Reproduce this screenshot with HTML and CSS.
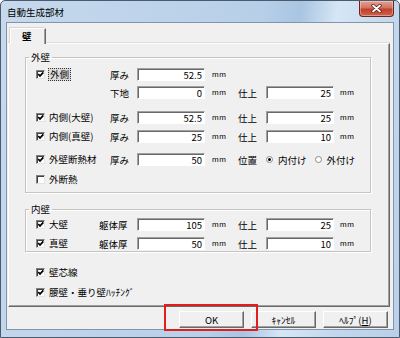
FILE: index.html
```html
<!DOCTYPE html>
<html lang="ja">
<head>
  <meta charset="UTF-8" />
  <title>自動生成部材</title>
  <link rel="stylesheet" href="styles.css">
</head>
<body>
  <div class="window">
    <div class="titlebar">
      <span class="title">自動生成部材</span>
      <button class="close" aria-label="閉じる">
        <svg width="11" height="9" viewBox="0 0 11 9">
          <path d="M2 1.5 L9 7.5 M9 1.5 L2 7.5" stroke="#5a2018" stroke-width="3.4" stroke-linecap="round" fill="none"/>
          <path d="M2 1.5 L9 7.5 M9 1.5 L2 7.5" stroke="#fff" stroke-width="1.8" stroke-linecap="round" fill="none"/>
        </svg>
      </button>
    </div>

    <div class="client">
      <div class="tabs"><div class="tab">壁</div></div>

      <div class="panel">
        <!-- 外壁 -->
        <fieldset class="group outer">
          <legend>外壁</legend>
          <div class="row">
            <label class="chk"><span class="box on"></span><span class="focus">外側</span></label>
            <span class="lbl">厚み</span>
            <input class="field" value="52.5" />
            <span class="unit">mm</span>
          </div>
          <div class="row gap5">
            <span class="chk"></span>
            <span class="lbl">下地</span>
            <input class="field" value="0" />
            <span class="unit">mm</span>
            <span class="lbl2">仕上</span>
            <input class="field" value="25" />
            <span class="unit2">mm</span>
          </div>
          <div class="row gap12">
            <label class="chk"><span class="box on"></span>内側(大壁)</label>
            <span class="lbl">厚み</span>
            <input class="field" value="52.5" />
            <span class="unit">mm</span>
            <span class="lbl2">仕上</span>
            <input class="field" value="25" />
            <span class="unit2">mm</span>
          </div>
          <div class="row gap6">
            <label class="chk"><span class="box on"></span>内側(真壁)</label>
            <span class="lbl">厚み</span>
            <input class="field" value="25" />
            <span class="unit">mm</span>
            <span class="lbl2">仕上</span>
            <input class="field" value="10" />
            <span class="unit2">mm</span>
          </div>
          <div class="row gap10">
            <label class="chk"><span class="box on"></span>外壁断熱材</label>
            <span class="lbl">厚み</span>
            <input class="field" value="50" />
            <span class="unit">mm</span>
            <span class="lbl2">位置</span>
            <label class="radio"><span class="dot on"></span>内付け</label>
            <label class="radio second"><span class="dot"></span>外付け</label>
          </div>
          <div class="row gap7">
            <label class="chk"><span class="box"></span>外断熱</label>
          </div>
        </fieldset>

        <!-- 内壁 -->
        <fieldset class="group inner">
          <legend>内壁</legend>
          <div class="row">
            <label class="chk"><span class="box on"></span>大壁</label>
            <span class="lbl">躯体厚</span>
            <input class="field" value="105" />
            <span class="unit">mm</span>
            <span class="lbl2">仕上</span>
            <input class="field" value="25" />
            <span class="unit2">mm</span>
          </div>
          <div class="row gap6">
            <label class="chk"><span class="box on"></span>真壁</label>
            <span class="lbl">躯体厚</span>
            <input class="field" value="50" />
            <span class="unit">mm</span>
            <span class="lbl2">仕上</span>
            <input class="field" value="10" />
            <span class="unit2">mm</span>
          </div>
        </fieldset>

        <div class="extras">
          <label class="chk"><span class="box on"></span>壁芯線</label>
          <label class="chk"><span class="box on"></span>腰壁・垂り壁ﾊｯﾁﾝｸﾞ</label>
        </div>
      </div>

      <div class="footer">
        <div class="ok-wrap">
          <button class="btn">OK</button>
          <span class="mark"></span>
        </div>
        <button class="btn">ｷｬﾝｾﾙ</button>
        <button class="btn">ﾍﾙﾌﾟ(<u>H</u>)</button>
      </div>
    </div>
  </div>
</body>
</html>
```

FILE: styles.css
```css
:root {
  --face: #f0f0f0;
  --shadow: #a0a0a0;
  --dark: #696969;
  --ui: "Noto Sans CJK JP", "Noto Sans", sans-serif;
}
* { box-sizing: border-box; margin: 0; padding: 0; }
body { background: #fff; font-family: var(--ui); font-size: 9.5px; color: #000; }

/* Window frame */
.window {
  width: 400px;
  height: 338px;
  border: 1px solid #4b5a6d;
  border-radius: 5px 5px 0 0;
  background: linear-gradient(100deg, #c6d9ed 0%, #b7cfe8 58%, #a9c5e2 66%, #d6e6f5 74%, #c3d8ed 86%, #b9d0e8 100%);
  display: flex;
  flex-direction: column;
  padding: 0 5px 7px 5px;
}
.titlebar {
  height: 21px;
  display: flex;
  align-items: flex-start;
  justify-content: space-between;
}
.title { margin: 5px 0 0 1px; font-size: 9.5px; line-height: 12px; }
.close {
  width: 35px;
  height: 16px;
  border: 1px solid #6b231a;
  border-top: none;
  border-radius: 0 0 4px 4px;
  background: linear-gradient(#e6a292, #d27361 45%, #c1402b 55%, #d0634c);
  box-shadow: inset 0 0 0 1px rgba(255,255,255,0.35);
  display: flex;
  align-items: center;
  justify-content: center;
}

/* Client area */
.client {
  flex: 1;
  background: var(--face);
  border: 1px solid #8395ab;
  display: flex;
  flex-direction: column;
}
.tabs { height: 20px; padding: 5px 0 0 3px; display: flex; }
.tab {
  width: 36px;
  height: 16px;
  border-top: 1px solid #fff;
  border-left: 1px solid #fff;
  border-right: 1px solid var(--dark);
  box-shadow: inset -1px 0 0 var(--shadow), -1px -1px 0 #d6d6d6;
  padding-left: 11px;
  line-height: 14px;
  font-weight: bold;
  position: relative;
  z-index: 1;
  background: var(--face);
}
.panel {
  width: 382px;
  height: 264px;
  margin-left: 1px;
  border-top: 1px solid #fff;
  border-left: 1px solid #fff;
  border-right: 1px solid var(--dark);
  border-bottom: 1px solid var(--dark);
  box-shadow: inset -1px -1px 0 var(--shadow), 0 -1px 0 #dcdcdc;
}

/* Group boxes */
.group {
  width: 346px;
  margin-left: 16px;
  border: 1px solid #c5c5c5;
  box-shadow: 1px 1px 0 #fff, inset 1px 1px 0 #fff;
  padding: 0;
}
.group legend { margin-left: 3px; padding: 0 2px; line-height: 12px; }
.group.outer { margin-top: 7px; padding: 5px 0 6px 0; }
.group.inner { margin-top: 10px; padding: 3px 0 1px 0; }

.row { height: 13px; display: flex; align-items: center; margin-left: 10px; white-space: nowrap; }
.gap5 { margin-top: 5px; }
.gap6 { margin-top: 6px; }
.gap7 { margin-top: 7px; }
.gap10 { margin-top: 10px; }
.gap12 { margin-top: 12px; }

.chk { width: 74px; display: flex; align-items: center; gap: 4px; line-height: 13px; }
.inner .chk { width: 63px; }
.lbl { width: 27px; }
.inner .lbl { width: 38px; }
.lbl2 { width: 28px; }
.unit, .unit2 { font-family: "Liberation Sans", sans-serif; font-size: 8px; letter-spacing: 0.5px; }
.unit { width: 33px; padding-left: 7px; }
.unit2 { padding-left: 6px; }

.focus { border: 1px dotted #333; background: #dcdcdc; padding: 0 1px; margin-left: -1px; line-height: 11px; }

.box {
  width: 9px;
  height: 9px;
  flex: none;
  background: #fff;
  border: 1px solid;
  border-color: #808080 #e3e3e3 #e3e3e3 #808080;
  box-shadow: inset 1px 1px 0 #404040;
}
.box.on {
  background: #fff url("data:image/svg+xml,%3Csvg xmlns='http://www.w3.org/2000/svg' width='7' height='7'%3E%3Cpath d='M1.2 3 L3 5 L6.3 1.4' stroke='black' stroke-width='1.8' fill='none'/%3E%3C/svg%3E") no-repeat 0 0;
}

.field {
  width: 68px;
  height: 13px;
  font: inherit;
  text-align: right;
  padding: 0 2px;
  background: #fff;
  border: 1px solid;
  border-color: var(--shadow) #fff #fff var(--shadow);
  box-shadow: inset 1px 1px 0 var(--dark);
  outline: none;
}

.radio { display: flex; align-items: center; gap: 5px; }
.radio.second { margin-left: 8px; }
.dot {
  width: 7px;
  height: 7px;
  border-radius: 50%;
  border: 1px solid #8a8a8a;
  background: #fff;
  display: flex;
  align-items: center;
  justify-content: center;
}
.dot.on::after { content: ""; width: 3px; height: 3px; border-radius: 50%; background: #000; }

.extras { margin: 14px 0 0 27px; display: flex; flex-direction: column; gap: 7px; }
.extras .chk { width: auto; height: 13px; }

/* Buttons */
.footer { margin-top: 4px; padding-right: 5px; display: flex; justify-content: flex-end; gap: 7px; }
.btn {
  width: 65px;
  height: 17px;
  font: inherit;
  background: var(--face);
  border: 1px solid;
  border-color: #fff var(--dark) var(--dark) #fff;
  box-shadow: inset -1px -1px 0 var(--shadow);
  line-height: 14px;
}
.btn u { text-decoration: underline; }
.ok-wrap { position: relative; display: flex; }
.mark {
  position: absolute;
  left: -15px;
  top: -7px;
  right: -14px;
  bottom: -3px;
  border: 2px solid #e21d1d;
  pointer-events: none;
}
```
